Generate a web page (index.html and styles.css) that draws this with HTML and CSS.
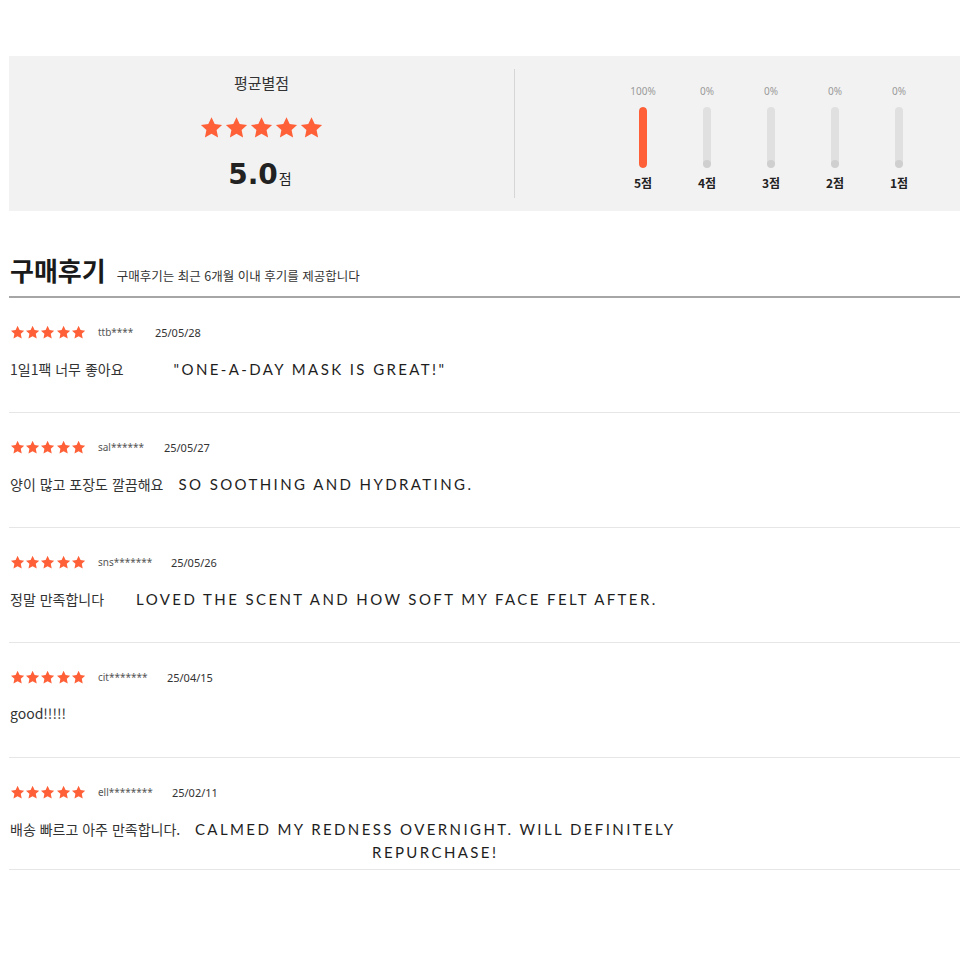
FILE: index.html
```html
<!DOCTYPE html>
<html lang="ko">
<head>
<meta charset="utf-8">
<title>구매후기</title>
<link rel="stylesheet" href="styles.css">
</head>
<body>
<svg class="defs" width="0" height="0" aria-hidden="true">
  <defs>
    <symbol id="star" viewBox="0 0 24 24">
      <path d="M12 1.2l3.2 6.9 7.4.9-5.5 5.1 1.5 7.4L12 17.8l-6.6 3.7 1.5-7.4L1.4 9l7.4-.9z"/>
    </symbol>
  </defs>
</svg>
<div class="page">
  <section class="summary">
    <div class="avg">
      <div class="avg-title">평균별점</div>
      <div class="stars stars--big">
        <svg class="star"><use href="#star"/></svg><svg class="star"><use href="#star"/></svg><svg class="star"><use href="#star"/></svg><svg class="star"><use href="#star"/></svg><svg class="star"><use href="#star"/></svg>
      </div>
      <div class="score"><span class="score-num">5.0</span><span class="score-unit">점</span></div>
    </div>
    <div class="dist">
      <div class="dist-col">
        <div class="dist-pct">100%</div>
        <div class="dist-bar"><div class="dist-fill dist-fill--full"></div></div>
        <div class="dist-label">5점</div>
      </div>
      <div class="dist-col">
        <div class="dist-pct">0%</div>
        <div class="dist-bar"><div class="dist-fill"></div></div>
        <div class="dist-label">4점</div>
      </div>
      <div class="dist-col">
        <div class="dist-pct">0%</div>
        <div class="dist-bar"><div class="dist-fill"></div></div>
        <div class="dist-label">3점</div>
      </div>
      <div class="dist-col">
        <div class="dist-pct">0%</div>
        <div class="dist-bar"><div class="dist-fill"></div></div>
        <div class="dist-label">2점</div>
      </div>
      <div class="dist-col">
        <div class="dist-pct">0%</div>
        <div class="dist-bar"><div class="dist-fill"></div></div>
        <div class="dist-label">1점</div>
      </div>
    </div>
  </section>

  <div class="reviews-head">
    <h2 class="reviews-title">구매후기</h2>
    <span class="reviews-sub">구매후기는 최근 6개월 이내 후기를 제공합니다</span>
  </div>

  <ul class="reviews">
    <li class="review">
      <div class="meta">
        <span class="stars stars--small"><svg class="star"><use href="#star"/></svg><svg class="star"><use href="#star"/></svg><svg class="star"><use href="#star"/></svg><svg class="star"><use href="#star"/></svg><svg class="star"><use href="#star"/></svg></span>
        <span class="user">ttb****</span>
        <span class="date">25/05/28</span>
      </div>
      <div class="body">
        <span class="ko">1일1팩 너무 좋아요</span>
        <span class="en en--r1">"ONE-A-DAY MASK IS GREAT!"</span>
      </div>
    </li>
    <li class="review">
      <div class="meta">
        <span class="stars stars--small"><svg class="star"><use href="#star"/></svg><svg class="star"><use href="#star"/></svg><svg class="star"><use href="#star"/></svg><svg class="star"><use href="#star"/></svg><svg class="star"><use href="#star"/></svg></span>
        <span class="user">sal******</span>
        <span class="date">25/05/27</span>
      </div>
      <div class="body">
        <span class="ko">양이 많고 포장도 깔끔해요</span>
        <span class="en en--r2">SO SOOTHING AND HYDRATING.</span>
      </div>
    </li>
    <li class="review">
      <div class="meta">
        <span class="stars stars--small"><svg class="star"><use href="#star"/></svg><svg class="star"><use href="#star"/></svg><svg class="star"><use href="#star"/></svg><svg class="star"><use href="#star"/></svg><svg class="star"><use href="#star"/></svg></span>
        <span class="user">sns*******</span>
        <span class="date">25/05/26</span>
      </div>
      <div class="body">
        <span class="ko">정말 만족합니다</span>
        <span class="en en--r3">LOVED THE SCENT AND HOW SOFT MY FACE FELT AFTER.</span>
      </div>
    </li>
    <li class="review">
      <div class="meta">
        <span class="stars stars--small"><svg class="star"><use href="#star"/></svg><svg class="star"><use href="#star"/></svg><svg class="star"><use href="#star"/></svg><svg class="star"><use href="#star"/></svg><svg class="star"><use href="#star"/></svg></span>
        <span class="user">cit*******</span>
        <span class="date">25/04/15</span>
      </div>
      <div class="body">
        <span class="ko">good!!!!!</span>
      </div>
    </li>
    <li class="review review--wrap">
      <div class="meta">
        <span class="stars stars--small"><svg class="star"><use href="#star"/></svg><svg class="star"><use href="#star"/></svg><svg class="star"><use href="#star"/></svg><svg class="star"><use href="#star"/></svg><svg class="star"><use href="#star"/></svg></span>
        <span class="user">ell********</span>
        <span class="date">25/02/11</span>
      </div>
      <div class="body">
        <span class="ko">배송 빠르고 아주 만족합니다.</span>
        <span class="en en--r5">CALMED MY REDNESS OVERNIGHT. WILL DEFINITELY REPURCHASE!</span>
      </div>
    </li>
  </ul>
</div>
</body>
</html>
```

FILE: styles.css
```css
* { box-sizing: border-box; }

html, body {
  margin: 0;
  padding: 0;
  background: #fff;
}

body {
  font-family: "Noto Sans CJK KR", "Noto Sans", sans-serif;
  color: #333;
  overflow: hidden;
}

.defs { position: absolute; width: 0; height: 0; }

.page {
  margin-left: 9px;
  width: 951px;
  padding-top: 56px;
}

/* ---------- summary ---------- */
.summary {
  display: flex;
  height: 155px;
  background: #f2f2f2;
}

.avg {
  width: 505px;
  display: flex;
  flex-direction: column;
  align-items: center;
  padding-top: 16px;
}

.avg-title {
  font-size: 15px;
  line-height: 22px;
  color: #333;
}

.stars { display: flex; }

.star { fill: #ff6038; display: block; }

.stars--big { margin-top: 22px; }
.stars--big .star { width: 25px; height: 24px; }

.score {
  margin-top: 17px;
  display: flex;
  align-items: baseline;
  color: #222;
}

.score-num {
  font-family: "DejaVu Sans", sans-serif;
  font-weight: 700;
  font-size: 28px;
  line-height: 36px;
  margin-left: -3px;
}

.score-unit {
  font-size: 14px;
  margin-left: 1px;
}

.dist {
  flex: 1;
  display: flex;
  margin: 13px 0;
  padding-left: 96px;
  border-left: 1px solid #d6d6d6;
}

.dist-col {
  width: 64px;
  display: flex;
  flex-direction: column;
  align-items: center;
  padding-top: 15px;
}

.dist-pct {
  font-family: "Noto Sans", sans-serif;
  font-size: 10px;
  line-height: 14px;
  color: #9a9a9a;
}

.dist-bar {
  margin-top: 9px;
  width: 8px;
  height: 61px;
  border-radius: 4px;
  background: #e0e0e0;
  display: flex;
  flex-direction: column;
  justify-content: flex-end;
  overflow: hidden;
}

.dist-fill {
  height: 8px;
  border-radius: 4px;
  background: #cfcfcf;
}

.dist-fill--full {
  height: 100%;
  background: #ff6038;
}

.dist-label {
  margin-top: 7px;
  font-size: 12px;
  line-height: 16px;
  font-weight: 700;
  color: #222;
}

/* ---------- reviews head ---------- */
.reviews-head {
  display: flex;
  align-items: baseline;
  gap: 11px;
  margin-top: 42px;
  padding-left: 1px;
  padding-bottom: 9px;
  border-bottom: 2px solid #a6a6a6;
}

.reviews-title {
  margin: 0;
  font-size: 26px;
  line-height: 34px;
  font-weight: 700;
  color: #1a1a1a;
}

.reviews-sub {
  font-size: 12.5px;
  color: #333;
}

/* ---------- review list ---------- */
.reviews {
  list-style: none;
  margin: 0;
  padding: 0;
}

.review {
  padding: 26px 0 31px 1px;
  border-bottom: 1px solid #e6e6e6;
}

.review--wrap { padding-bottom: 5px; }

.meta {
  display: flex;
  align-items: center;
  height: 16px;
}

.stars--small .star { width: 15.2px; height: 15px; }

.user {
  margin-left: 12px;
  font-family: "Noto Sans", sans-serif;
  font-size: 10px;
  color: #555;
  min-width: 57px;
}

.date {
  font-family: "Noto Sans", sans-serif;
  font-size: 11px;
  color: #333;
}

.review:nth-child(1) .user { min-width: 57px; }
.review:nth-child(2) .user { min-width: 66px; }
.review:nth-child(3) .user { min-width: 73px; }
.review:nth-child(4) .user { min-width: 69px; }
.review:nth-child(5) .user { min-width: 74px; }

.body {
  margin-top: 18px;
  display: flex;
  align-items: baseline;
  min-height: 23px;
}

.ko {
  font-size: 14px;
  line-height: 20px;
  color: #333;
  white-space: nowrap;
}

.en {
  font-family: "Lato", "Liberation Sans", sans-serif;
  font-size: 15px;
  line-height: 23px;
  letter-spacing: 2.4px;
  color: #1e1e1e;
}

.en--r1 { margin-left: 50px; }
.en--r2 { margin-left: 15px; }
.en--r3 { margin-left: 32px; }
.en--r5 {
  margin-left: 5px;
  width: 500px;
  text-align: center;
}
```
